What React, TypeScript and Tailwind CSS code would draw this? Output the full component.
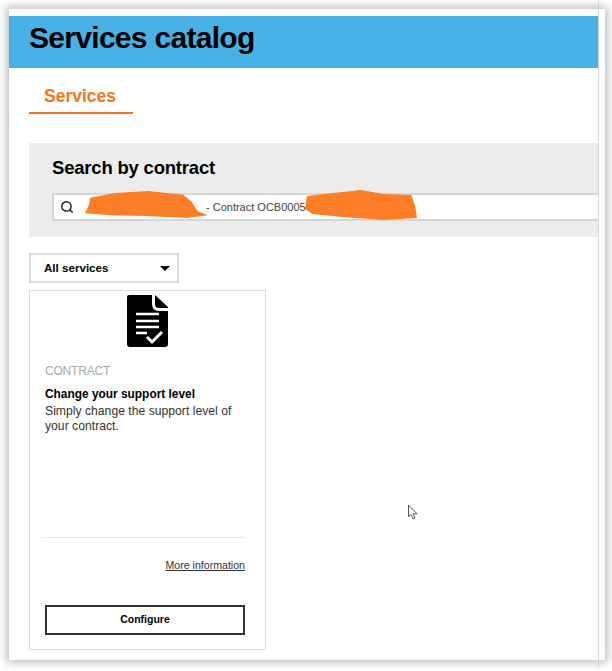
import React from 'react';
import { Search } from 'lucide-react';

const sans = { fontFamily: '"Liberation Sans", Arial, sans-serif' };

const DocIcon: React.FC = () => (
    <svg width="41" height="52" viewBox="0 0 41 52" aria-hidden="true">
        <path d="M2 0H25V9Q25 16 32 16H41V49Q41 52 38 52H3Q0 52 0 49V2Q0 0 2 0Z" fill="#000" />
        <path d="M28 0L41 12V13H32Q28 13 28 9Z" fill="#000" />
        <path d="M9 19H32M9 26H32M9 32H32M9 38H20" stroke="#fff" strokeWidth="2.4" fill="none" />
        <path d="M20 42L25 47L35 37" stroke="#fff" strokeWidth="3" fill="none" />
    </svg>
);

const Scribble: React.FC<{ className: string; d: string }> = ({ className, d }) => (
    <svg className={className} viewBox="0 0 120 30" preserveAspectRatio="none" aria-hidden="true">
        <path d={d} fill="#fd7e26" />
    </svg>
);

const Cursor: React.FC = () => (
    <svg className="absolute left-[407px] top-[504px]" width="12" height="16" viewBox="0 0 12 16" aria-hidden="true">
        <path d="M1.5 1V12.5L4 10.5L6 15L8 14L6.2 9.8H10Z" fill="#fff" stroke="#555" strokeWidth="1" />
    </svg>
);

const App: React.FC = () => {
    return (
        <div className="relative w-[612px] h-[671px] bg-white overflow-hidden text-black" style={sans}>
            <div className="absolute left-[9px] top-[9px] w-[596px] h-[651px] bg-white shadow-[0_0_8px_3px_rgba(0,0,0,0.24)]" />
            <div className="relative ml-[9px] pt-[16px] w-[589px] h-[651px] box-content border-r border-[#d4d4d4]">
                <header className="h-[52px] bg-[#48b2e6] pl-[20px] pt-[5px]">
                    <h1 className="text-[30px] leading-[34px] font-bold tracking-[-0.7px]">Services catalog</h1>
                </header>

                <div className="pl-[20px]">
                    <nav className="mt-[16px] w-[104px] h-[30px] border-b-2 border-[#f4761c] pl-[15px]">
                        <span className="block text-[17.5px] leading-[24px] font-bold text-[#f4761c]">Services</span>
                    </nav>

                    <section className="relative mt-[29px] h-[94px] bg-[#ececec] pl-[23px] pt-[13px]">
                        <h2 className="text-[18.5px] leading-[24px] font-bold tracking-[-0.2px]">Search by contract</h2>
                        <div className="mt-[13px] h-[28px] bg-white border-2 border-r-0 border-[#d6d6d6] flex items-center pl-[6px]">
                            <Search size={14} strokeWidth={2.5} className="text-[#222]" />
                            <span className="ml-[6px] pl-[126px] text-[11px] text-[#444]">- Contract OCB0005</span>
                        </div>
                        <Scribble className="absolute left-[55px] top-[47px] w-[124px] h-[29px]" d="M6 8 L30 3 L62 1 L96 5 L104 12 L110 22 L120 26 L100 29 L60 27 L26 26 L1 24 L5 15Z" />
                        <Scribble className="absolute left-[276px] top-[47px] w-[112px] h-[30px]" d="M2 6 L30 3 L60 0 L84 4 L114 5 L118 16 L120 28 L84 30 L40 27 L8 24 L0 19Z" />
                    </section>

                    <div className="mt-[16px] w-[150px] h-[30px] border-2 border-[#dedede] flex items-center justify-between pl-[13px] pr-[7px]">
                        <span className="text-[11.6px] font-bold">All services</span>
                        <span className="w-0 h-0 border-x-[5px] border-x-transparent border-t-[5px] border-t-black" />
                    </div>

                    <article className="mt-[7px] w-[237px] h-[360px] border border-[#dcdcdc] flex flex-col pl-[15px] pr-[20px] pt-[4px] pb-[14px]">
                        <div className="flex justify-center ml-[4px]">
                            <DocIcon />
                        </div>
                        <p className="mt-[17px] text-[12px] leading-[14px] text-[#a9a9a9] tracking-[-0.2px]">CONTRACT</p>
                        <h3 className="mt-[9px] text-[11.9px] leading-[14px] font-bold">Change your support level</h3>
                        <p className="mt-[3px] text-[12.2px] leading-[15px] text-[#333]">Simply change the support level of your contract.</p>

                        <div className="mt-auto border-t border-[#e2e2e2] pt-[20px] flex justify-end">
                            <a className="text-[10.6px] leading-[14px] underline text-[#333]">More information</a>
                        </div>
                        <button className="mt-[33px] h-[30px] border-2 border-[#333] text-[10.5px] font-bold">Configure</button>
                    </article>
                </div>
            </div>
            <Cursor />
        </div>
    );
};

export default App;
